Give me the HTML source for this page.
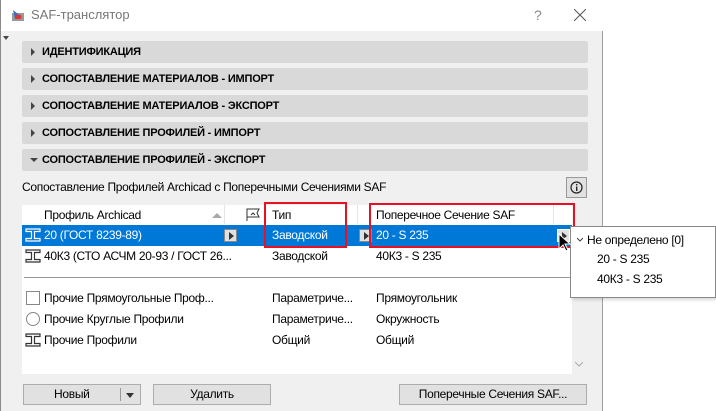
<!DOCTYPE html>
<html><head><meta charset="utf-8"><style>
*{margin:0;padding:0;box-sizing:border-box}
body{width:716px;height:411px;background:#fff;font-family:"Liberation Sans","DejaVu Sans",sans-serif;font-size:12px;letter-spacing:-0.3px;color:#000;position:relative;overflow:hidden}
.win{position:absolute;left:0;top:0;width:603px;height:411px;background:#f0f0f0;border-right:1px solid #a0a0a0;border-left:1px solid #8a8a8a}
.title{position:absolute;left:0;top:0;width:602px;height:31px;background:#fff}
.title .t{position:absolute;left:30px;top:7px;font-size:13px;color:#777;letter-spacing:0}
.ab{position:absolute}
.sec{position:absolute;left:21px;width:566px;height:22px;background:#d9d9d9;border-radius:2px;font-weight:bold;font-size:11px;letter-spacing:-0.2px;line-height:22px;padding-left:20px}
.sec:before{content:"";position:absolute;left:9px;top:7px;border-left:4px solid #444;border-top:4px solid transparent;border-bottom:4px solid transparent}
.sec.open:before{left:8px;top:9px;border-top:4px solid #444;border-left:4px solid transparent;border-right:4px solid transparent;border-bottom:0}
.tbl{position:absolute;left:21px;top:205px;width:550px;height:169px;background:#fff}
.txt{position:absolute;white-space:nowrap}
.btn{position:absolute;height:21px;background:#e1e1e1;border:1px solid #adadad;text-align:center;line-height:19px}
.arr{position:absolute;width:13px;height:13px;background:#e1e1e1;border:1px solid #888}
.arr:after{content:"";position:absolute;left:4px;top:2px;border-left:5px solid #333;border-top:4px solid transparent;border-bottom:4px solid transparent}
.red{position:absolute;border:2px solid #e81123}
</style></head><body>
<div class="win">
<div class="title">
<svg class="ab" style="left:9px;top:7px" width="16" height="16"><rect x="2" y="6" width="12" height="8" fill="#999"/><path d="M3 3 L12 10 L5 12Z" fill="#3a6fc4"/><rect x="5" y="8" width="6" height="4" fill="#d33"/></svg>
<div class="t">SAF-транслятор</div>
<div class="txt" style="left:533px;top:7px;color:#888;font-size:14px">?</div>
<svg class="ab" style="left:573px;top:9px" width="12" height="12"><path d="M0 0L12 12M12 0L0 12" stroke="#555" stroke-width="1"/></svg>
</div>
<div class="ab" style="left:2px;top:36px;border-top:4px solid #444;border-left:3px solid transparent;border-right:3px solid transparent"></div>
<div class="sec" style="top:41px">ИДЕНТИФИКАЦИЯ</div>
<div class="sec" style="top:68px">СОПОСТАВЛЕНИЕ МАТЕРИАЛОВ - ИМПОРТ</div>
<div class="sec" style="top:95px">СОПОСТАВЛЕНИЕ МАТЕРИАЛОВ - ЭКСПОРТ</div>
<div class="sec" style="top:122px">СОПОСТАВЛЕНИЕ ПРОФИЛЕЙ - ИМПОРТ</div>
<div class="sec open" style="top:149px">СОПОСТАВЛЕНИЕ ПРОФИЛЕЙ - ЭКСПОРТ</div>
<div class="txt" style="left:21px;top:180px">Сопоставление Профилей Archicad с Поперечными Сечениями SAF</div>
<div class="ab" style="left:565px;top:177px;width:21px;height:21px;background:#e1e1e1;border:1px solid #999"><svg style="position:absolute;left:3px;top:3px" width="13" height="13"><circle cx="6.5" cy="6.5" r="5.5" fill="none" stroke="#222" stroke-width="1.2"/><rect x="6" y="5.5" width="1.4" height="4.5" fill="#222"/><rect x="6" y="3" width="1.4" height="1.4" fill="#222"/></svg></div>

<div class="tbl">
<div class="txt" style="left:22px;top:3px">Профиль Archicad</div>
<div class="ab" style="left:190px;top:8px;border-bottom:5px solid #aaa;border-left:5px solid transparent;border-right:5px solid transparent"></div>
<div class="ab" style="left:202px;top:0;width:1px;height:19px;background:#e5e5e5"></div>
<div class="ab" style="left:242px;top:0;width:1px;height:19px;background:#e5e5e5"></div>
<svg class="ab" style="left:224px;top:3px" width="16" height="14"><path d="M1 13V1H13L11 5L13 9H1" fill="none" stroke="#333"/><path d="M5 7L7 5L9 7" fill="none" stroke="#333"/></svg>
<div class="txt" style="left:250px;top:3px">Тип</div>
<div class="ab" style="left:335px;top:0;width:1px;height:19px;background:#e5e5e5"></div>
<div class="txt" style="left:354px;top:3px">Поперечное Сечение SAF</div>
<div class="ab" style="left:531px;top:0;width:1px;height:19px;background:#e5e5e5"></div>
<div class="ab" style="left:0;top:20px;width:550px;height:21px;background:#0078d7"></div>
<svg class="ab" style="left:3px;top:23px" width="16" height="14"><path d="M1 1H15V3.5H9.5V10.5H15V13H1V10.5H6.5V3.5H1Z" fill="none" stroke="#fff" stroke-width="1.2"/></svg>
<div class="txt" style="left:22px;top:23px;color:#fff">20 (ГОСТ 8239-89)</div>
<div class="arr" style="left:202px;top:24px"></div>
<div class="txt" style="left:250px;top:23px;color:#fff">Заводской</div>
<div class="arr" style="left:337px;top:24px"></div>
<div class="txt" style="left:354px;top:23px;color:#fff">20 - S 235</div>
<div class="arr" style="left:535px;top:24px;border-color:#fff"></div>
<svg class="ab" style="left:3px;top:44px" width="16" height="14"><path d="M1 1H15V3.5H9.5V10.5H15V13H1V10.5H6.5V3.5H1Z" fill="none" stroke="#333" stroke-width="1.2"/></svg>
<div class="txt" style="left:22px;top:44px">40К3 (СТО АСЧМ 20-93 / ГОСТ 26...</div>
<div class="txt" style="left:250px;top:44px">Заводской</div>
<div class="txt" style="left:354px;top:44px">40К3 - S 235</div>
<div class="ab" style="left:2px;top:72px;width:546px;height:1px;background:#999"></div>
<div class="ab" style="left:4px;top:86px;width:14px;height:14px;border:1px solid #888"></div>
<div class="txt" style="left:22px;top:86px">Прочие Прямоугольные Проф...</div>
<div class="txt" style="left:250px;top:86px">Параметриче...</div>
<div class="txt" style="left:354px;top:86px">Прямоугольник</div>
<div class="ab" style="left:4px;top:107px;width:14px;height:14px;border:1px solid #888;border-radius:50%"></div>
<div class="txt" style="left:22px;top:107px">Прочие Круглые Профили</div>
<div class="txt" style="left:250px;top:107px">Параметриче...</div>
<div class="txt" style="left:354px;top:107px">Окружность</div>
<svg class="ab" style="left:3px;top:128px" width="16" height="14"><path d="M1 1H15V3.5H9.5V10.5H15V13H1V10.5H6.5V3.5H1Z" fill="none" stroke="#333" stroke-width="1.2"/></svg>
<div class="txt" style="left:22px;top:128px">Прочие Профили</div>
<div class="txt" style="left:250px;top:128px">Общий</div>
<div class="txt" style="left:354px;top:128px">Общий</div>
</div>
<svg class="ab" style="left:574px;top:362px" width="8" height="5"><path d="M0 0L4 4L8 0" fill="none" stroke="#aaa"/></svg>
<div class="red" style="left:263px;top:202px;width:83px;height:46px"></div>
<div class="red" style="left:368px;top:203px;width:206px;height:45px"></div>
<div class="btn" style="left:22px;top:384px;width:118px"><span style="position:absolute;left:30px">Новый</span><span style="position:absolute;left:96px;top:3px;width:1px;height:13px;background:#999"></span><span style="position:absolute;left:102px;top:8px;border-top:5px solid #333;border-left:4px solid transparent;border-right:4px solid transparent"></span></div>
<div class="btn" style="left:152px;top:384px;width:118px">Удалить</div>
<div class="btn" style="left:398px;top:384px;width:188px">Поперечные Сечения SAF...</div>
</div>
<div class="ab" style="left:570px;top:226px;width:146px;height:72px;background:#fff;border:1px solid #888;box-shadow:2px 2px 3px rgba(0,0,0,.15)"></div>
<svg class="ab" style="left:577px;top:237px" width="6" height="5"><path d="M0 1L3 4L6 1" fill="none" stroke="#444"/></svg>
<div class="txt" style="left:587px;top:233px">Не определено [0]</div>
<div class="txt" style="left:597px;top:252px">20 - S 235</div>
<div class="txt" style="left:597px;top:272px">40К3 - S 235</div>
<svg class="ab" style="left:558px;top:233px" width="14" height="20"><path d="M1 1V16L5 12L8 18L10 17L7 11H12Z" fill="#000" stroke="#fff" stroke-width="1"/></svg>
</body></html>
